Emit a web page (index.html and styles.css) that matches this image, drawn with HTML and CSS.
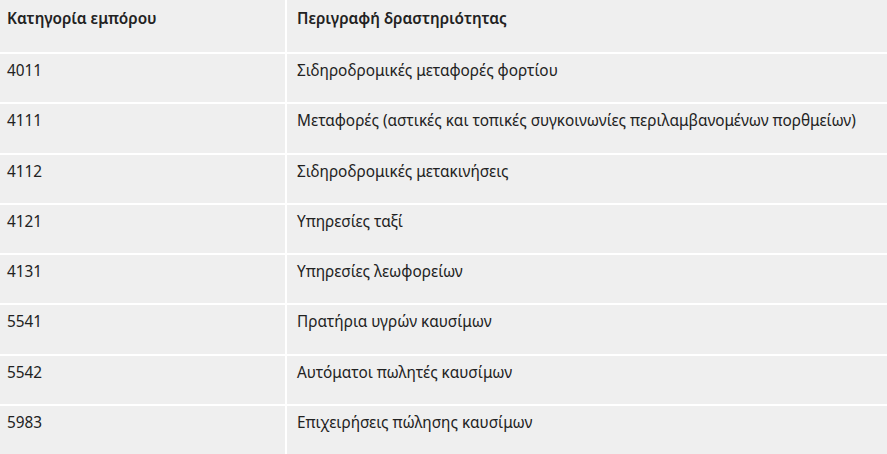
FILE: index.html
```html
<!DOCTYPE html>
<html lang="el">
<head>
<meta charset="utf-8">
<link rel="stylesheet" href="styles.css">
</head>
<body>
<table class="mcc">
  <thead>
    <tr><th class="c1">Κατηγορία εμπόρου</th><th class="c2">Περιγραφή δραστηριότητας</th></tr>
  </thead>
  <tbody>
    <tr><td class="c1">4011</td><td class="c2">Σιδηροδρομικές μεταφορές φορτίου</td></tr>
    <tr><td class="c1">4111</td><td class="c2">Μεταφορές (αστικές και τοπικές συγκοινωνίες περιλαμβανομένων πορθμείων)</td></tr>
    <tr><td class="c1">4112</td><td class="c2">Σιδηροδρομικές μετακινήσεις</td></tr>
    <tr><td class="c1">4121</td><td class="c2">Υπηρεσίες ταξί</td></tr>
    <tr><td class="c1">4131</td><td class="c2">Υπηρεσίες λεωφορείων</td></tr>
    <tr><td class="c1">5541</td><td class="c2">Πρατήρια υγρών καυσίμων</td></tr>
    <tr><td class="c1">5542</td><td class="c2">Αυτόματοι πωλητές καυσίμων</td></tr>
    <tr><td class="c1">5983</td><td class="c2">Επιχειρήσεις πώλησης καυσίμων</td></tr>
  </tbody>
</table>
</body>
</html>
```
FILE: styles.css
```css
html, body {
  margin: 0;
  padding: 0;
  background: #ffffff;
}
body {
  font-family: "Noto Sans", "Open Sans", sans-serif;
  color: #222222;
  font-size: 15.35px;
}
.mcc {
  width: 887px;
  border-collapse: collapse;
  background: #efefef;
}
.mcc th, .mcc td {
  text-align: left;
  vertical-align: top;
  padding: 6px 10px 0;
  border: 2px solid #ffffff;
  box-sizing: border-box;
  line-height: 20px;
}
.mcc thead th {
  border-top: 0;
  padding-top: 8px;
  height: 53px;
  font-weight: 600;
}
.mcc .c1 {
  width: 286px;
  padding-left: 7px;
  border-left: 0;
}
.mcc .c2 {
  border-right: 0;
}
.mcc td {
  font-weight: 400;
  height: 50.3px;
}
```
